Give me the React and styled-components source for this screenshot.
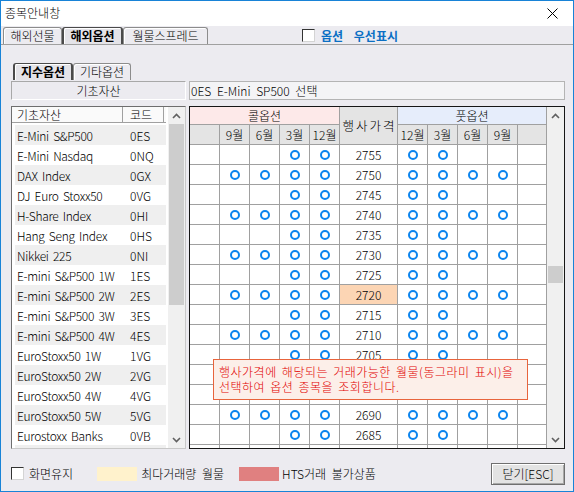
import React from "react";
import styled, { createGlobalStyle, css } from "styled-components";

const GlobalStyle = createGlobalStyle`
  html, body { margin: 0; padding: 0; background: #fff; }
  body {
    font-family: "Noto Sans CJK KR", "Noto Sans", sans-serif;
    font-size: 12px;
    font-weight: 300;
    color: #000;
    word-spacing: 3px;
  }
  * { box-sizing: border-box; }
`;

const Window = styled.div`
  width: 574px;
  height: 492px;
  border: 1px solid #1883d7;
  background: #ecebf0;
  display: flex;
  flex-direction: column;
  overflow: hidden;
`;

const TitleBar = styled.div`
  height: 25px;
  flex: none;
  background: #fff;
  display: flex;
  align-items: center;
  justify-content: space-between;
  padding: 0 15px 1px 4px;
`;

const Title = styled.span`
  line-height: 14px;
`;

const TabStrip = styled.div`
  height: 19px;
  flex: none;
  display: flex;
  align-items: flex-end;
  padding-left: 2px;
  border-bottom: 1px solid #a0a0a0;
`;

const Tab = styled.div`
  width: ${(p) => p.$w}px;
  height: 17px;
  flex: none;
  border: 1px solid #8c8c8c;
  border-bottom: none;
  border-radius: 3px 3px 0 0;
  box-shadow: inset 1px 1px 0 #fff;
  text-align: center;
  line-height: 16px;
  ${(p) =>
    p.$active &&
    css`
      font-weight: bold;
      border-color: #4a4a4a;
      border-width: 1px 2px 0 2px;
      background: #e4e3e8;
    `}
`;

const OptionToggle = styled.label`
  display: flex;
  align-items: center;
  align-self: center;
  gap: 6px;
  margin-left: ${(p) => p.$ml}px;
  color: #0b6fc4;
  font-weight: bold;
  word-spacing: 8px;
`;

const CheckBox = styled.span`
  width: 13px;
  height: 13px;
  flex: none;
  background: #fff;
  border: 1px solid #333;
  border-right-color: #d4d4d4;
  border-bottom-color: #d4d4d4;
`;

const Content = styled.div`
  flex: 1;
  display: flex;
  flex-direction: column;
  padding: 18px 8px 0 10px;
`;

const SubTabs = styled.div`
  height: 17px;
  display: flex;
  padding-left: 2px;
`;

const InfoRow = styled.div`
  margin-top: 1px;
  height: 19px;
  display: flex;
  gap: 3px;
`;

const AssetLabel = styled.div`
  width: 175px;
  border: 1px solid #a8a8a8;
  border-right-color: #fff;
  border-bottom-color: #fff;
  text-align: center;
  line-height: 17px;
`;

const Selected = styled.div`
  flex: 1;
  background: #f4f4f6;
  border: 1px solid #b4b4b4;
  padding-left: 1px;
  line-height: 17px;
`;

const Panels = styled.div`
  margin-top: 6px;
  height: 343px;
  display: flex;
  gap: 3px;
`;

const ListBox = styled.div`
  width: 175px;
  border: 1px solid #6e6e6e;
  border-right-color: #c8c8c8;
  border-bottom-color: #c8c8c8;
  background: #fff;
  display: flex;
  overflow: hidden;
`;

const ListPane = styled.div`
  flex: 1;
  display: flex;
  flex-direction: column;
  overflow: hidden;
`;

const ListHead = styled.div`
  height: 16px;
  flex: none;
  display: flex;
  background: #fafafa;
  border-bottom: 1px solid #a0a0a0;
`;

const HeadCol = styled.div`
  width: ${(p) => p.$w}px;
  padding-left: ${(p) => p.$pl}px;
  border-right: 1px solid #a0a0a0;
  display: flex;
  align-items: center;
  line-height: 15px;
`;

const Rows = styled.div`
  padding: 2px 0 0 3px;
`;

const Row = styled.div`
  height: 20px;
  display: flex;
  align-items: center;
  background: ${(p) => (p.$shade ? "#efefef" : "#fff")};
`;

const NameCell = styled.span`
  width: 113px;
  flex: none;
  padding-left: 2px;
  white-space: nowrap;
  letter-spacing: -0.3px;
  word-spacing: 2px;
`;

const CodeCell = styled.span`
  padding-left: 2px;
`;

const Track = styled.div`
  width: 17px;
  flex: none;
  margin-left: ${(p) => p.$ml || 0}px;
  background: #f0f0f0;
  display: flex;
  flex-direction: column;
`;

const Arrow = styled.div`
  height: 17px;
  flex: none;
  display: flex;
  align-items: center;
  justify-content: center;
`;

const Gap = styled.div`
  height: ${(p) => p.$h}px;
  flex: none;
`;

const Thumb = styled.div`
  height: ${(p) => p.$h}px;
  flex: none;
  margin: 0 1px;
  background: #cdcdcd;
`;

const Rest = styled.div`
  flex: 1;
`;

const GridBox = styled.div`
  flex: 1;
  position: relative;
  border: 1px solid #161616;
  background: #fff;
  display: flex;
  overflow: hidden;
`;

const Table = styled.div`
  width: 357px;
  flex: none;
  display: grid;
  grid-template-columns: repeat(5, 30px) 58px repeat(4, 30px) 29px;
  grid-template-rows: 18px 20px;
  grid-auto-rows: 20px;
  align-content: start;
  overflow: hidden;
`;

const Cell = styled.div`
  display: flex;
  align-items: center;
  justify-content: center;
  border-right: 1px solid #a0a0a0;
  border-bottom: 1px solid #a0a0a0;
  background: ${(p) => p.$bg || "#fff"};
`;

const GroupHead = styled(Cell)`
  grid-column: ${(p) => p.$col} / span 5;
  grid-row: 1;
`;

const StrikeHead = styled(Cell)`
  grid-column: 6;
  grid-row: 1 / span 2;
  background: #e4e4e4;
  letter-spacing: 2px;
  padding-left: 2px;
  font-size: 12.5px;
`;

const Note = styled.div`
  position: absolute;
  left: 23px;
  top: 252px;
  width: 315px;
  height: 41px;
  padding: 4px 0 0 5px;
  background: #fcefe9;
  border: 1px solid #e8643c;
  color: #e20000;
  line-height: 15px;
  letter-spacing: 0.5px;
  word-spacing: 2px;
`;

const BottomBar = styled.div`
  margin-top: 6px;
  height: 35px;
  flex: none;
  display: flex;
  align-items: center;
  padding: 0 8px 0 10px;
`;

const Caption = styled.span`
  margin-left: ${(p) => p.$ml}px;
`;

const Swatch = styled.span`
  width: 40px;
  height: 14px;
  flex: none;
  margin-left: ${(p) => p.$ml}px;
  background: ${(p) => p.$color};
`;

const CloseButton = styled.button`
  margin-left: auto;
  width: 74px;
  height: 22px;
  font: inherit;
  word-spacing: 0;
  background: #e3e3e3;
  border: 1px solid #6f6f6f;
  box-shadow: inset 1px 1px 0 #fff, inset -1px -1px 0 #a8a8a8;
  padding: 0;
`;

const Chevron = ({ up }) => (
  <svg width="9" height="6" viewBox="0 0 9 6">
    <polyline
      points={up ? "1,5 4.5,1.5 8,5" : "1,1 4.5,4.5 8,1"}
      fill="none"
      stroke="#606060"
      strokeWidth="1.6"
    />
  </svg>
);

const Ring = () => (
  <svg width="12" height="12" viewBox="0 0 12 12">
    <circle cx="6" cy="6" r="4" fill="none" stroke="#0b84ee" strokeWidth="2" />
  </svg>
);

const ScrollBar = ({ gap, thumb, ml }) => (
  <Track $ml={ml}>
    <Arrow>
      <Chevron up />
    </Arrow>
    <Gap $h={gap} />
    <Thumb $h={thumb} />
    <Rest />
    <Arrow>
      <Chevron />
    </Arrow>
  </Track>
);

const assets = [
  ["E-Mini S&P500", "0ES"],
  ["E-Mini Nasdaq", "0NQ"],
  ["DAX Index", "0GX"],
  ["DJ Euro Stoxx50", "0VG"],
  ["H-Share Index", "0HI"],
  ["Hang Seng Index", "0HS"],
  ["Nikkei 225", "0NI"],
  ["E-mini S&P500 1W", "1ES"],
  ["E-mini S&P500 2W", "2ES"],
  ["E-mini S&P500 3W", "3ES"],
  ["E-mini S&P500 4W", "4ES"],
  ["EuroStoxx50 1W", "1VG"],
  ["EuroStoxx50 2W", "2VG"],
  ["EuroStoxx50 4W", "4VG"],
  ["EuroStoxx50 5W", "5VG"],
  ["Eurostoxx Banks", "0VB"],
  ["", ""],
];

const callMonths = ["", "9월", "6월", "3월", "12월"];
const putMonths = ["12월", "3월", "6월", "9월", ""];

const strikes = Array.from({ length: 16 }, (_, i) => 2755 - i * 5);

// 10단위 행사가는 전 월물, 5단위는 근월물만
const callMarks = (k) => (k % 10 === 0 ? [0, 1, 1, 1, 1] : [0, 0, 0, 1, 1]);
const putMarks = (k) => (k % 10 === 0 ? [1, 1, 1, 1, 0] : [1, 1, 0, 0, 0]);

export default function App() {
  return (
    <>
      <GlobalStyle />
      <Window>
        <TitleBar>
          <Title>종목안내창</Title>
          <svg width="11" height="11" viewBox="0 0 11 11">
            <path d="M0.5 0.5 L10.5 10.5 M10.5 0.5 L0.5 10.5" stroke="#000" strokeWidth="1" />
          </svg>
        </TitleBar>

        <TabStrip>
          <Tab $w={59}>해외선물</Tab>
          <Tab $w={61} $active>
            해외옵션
          </Tab>
          <Tab $w={85}>월물스프레드</Tab>
          <OptionToggle $ml={94}>
            <CheckBox />
            옵션 우선표시
          </OptionToggle>
        </TabStrip>

        <Content>
          <SubTabs>
            <Tab $w={60} $active>
              지수옵션
            </Tab>
            <Tab $w={58}>기타옵션</Tab>
          </SubTabs>

          <InfoRow>
            <AssetLabel>기초자산</AssetLabel>
            <Selected>0ES E-Mini SP500 선택</Selected>
          </InfoRow>

          <Panels>
            <ListBox>
              <ListPane>
                <ListHead>
                  <HeadCol $w={111} $pl={5}>
                    기초자산
                  </HeadCol>
                  <HeadCol $w={41} $pl={7}>
                    코드
                  </HeadCol>
                </ListHead>
                <Rows>
                  {assets.map(([name, code], i) => (
                    <Row key={i} $shade={i % 2 === 0}>
                      <NameCell>{name}</NameCell>
                      <CodeCell>{code}</CodeCell>
                    </Row>
                  ))}
                </Rows>
              </ListPane>
              <ScrollBar gap={0} thumb={181} ml={2} />
            </ListBox>

            <GridBox>
              <Table>
                <GroupHead $col={1} $bg="#fde9e9">
                  콜옵션
                </GroupHead>
                <StrikeHead>행사가격</StrikeHead>
                <GroupHead $col={7} $bg="#e6edfb">
                  풋옵션
                </GroupHead>
                {callMonths.map((m, i) => (
                  <Cell key={"c" + i} $bg="#e4e4e4">
                    {m}
                  </Cell>
                ))}
                {putMonths.map((m, i) => (
                  <Cell key={"p" + i} $bg="#e4e4e4">
                    {m}
                  </Cell>
                ))}
                {strikes.map((k) => (
                  <React.Fragment key={k}>
                    {callMarks(k).map((on, i) => (
                      <Cell key={"c" + i}>{on ? <Ring /> : null}</Cell>
                    ))}
                    <Cell $bg={k === 2720 ? "#fcd5b4" : "#fff"}>{k}</Cell>
                    {putMarks(k).map((on, i) => (
                      <Cell key={"p" + i}>{on ? <Ring /> : null}</Cell>
                    ))}
                  </React.Fragment>
                ))}
              </Table>
              <ScrollBar gap={142} thumb={17} />
              <Note>
                행사가격에 해당되는 거래가능한 월물(동그라미 표시)을
                <br />
                선택하여 옵션 종목을 조회합니다.
              </Note>
            </GridBox>
          </Panels>
        </Content>

        <BottomBar>
          <CheckBox />
          <Caption $ml={5}>화면유지</Caption>
          <Swatch $ml={24} $color="#fff2cc" />
          <Caption $ml={4}>최다거래량 월물</Caption>
          <Swatch $ml={15} $color="#e08080" />
          <Caption $ml={3}>HTS거래 불가상품</Caption>
          <CloseButton>닫기[ESC]</CloseButton>
        </BottomBar>
      </Window>
    </>
  );
}
